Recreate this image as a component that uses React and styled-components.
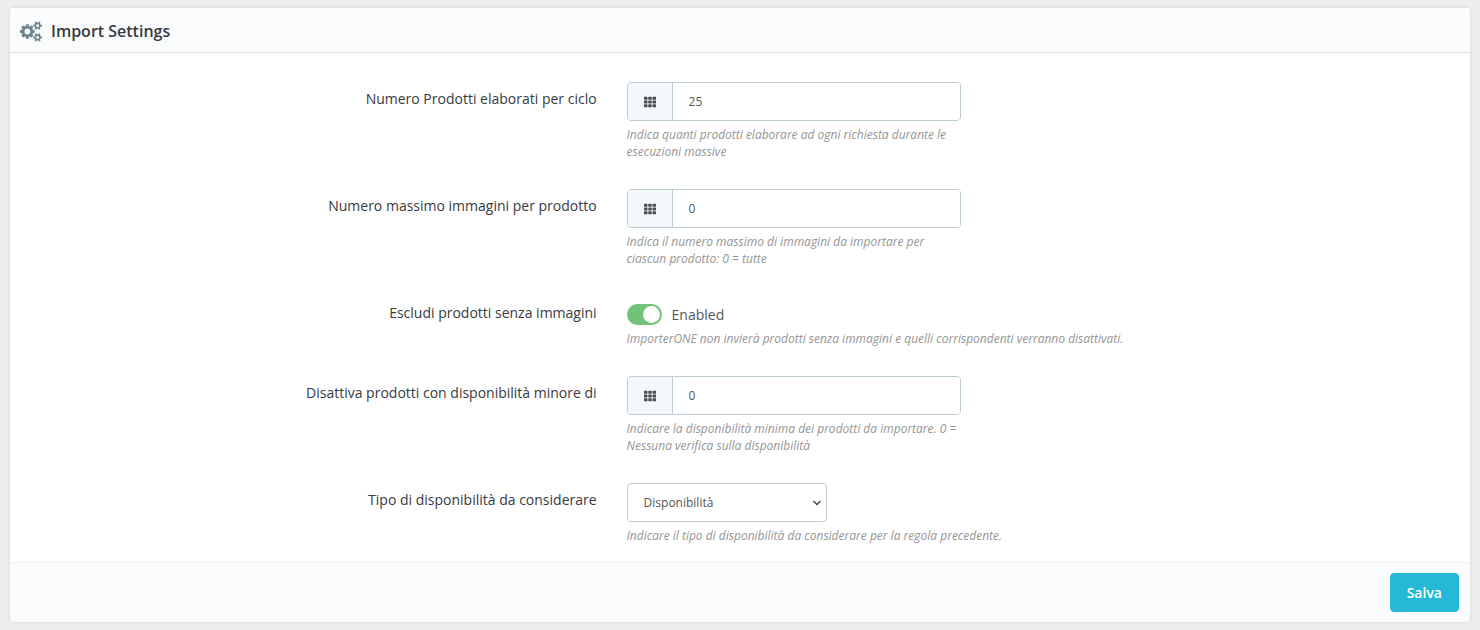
import { FaTh } from 'react-icons/fa';
import styled, { createGlobalStyle } from 'styled-components';

const GlobalStyle = createGlobalStyle`
    * {
        box-sizing: border-box;
    }
    body {
        margin: 0;
        padding: 8px 10px;
        background: #eceeef;
        color: #363a41;
        font-family: 'Open Sans', sans-serif;
        font-size: 14px;
    }
    input, select, button {
        font-family: inherit;
    }
`;

const Panel = styled.form`
    background: #fff;
    border-radius: 4px;
    box-shadow: 0 0 4px rgba(0, 0, 0, 0.1);
    overflow: hidden;
`;

const PanelHeader = styled.header`
    display: flex;
    align-items: center;
    gap: 9px;
    height: 45px;
    padding: 2px 10px 0;
    background: #fafbfc;
    border-bottom: 1px solid #dbe3e6;
    color: #363a41;
`;

const Title = styled.h3`
    margin: 0;
    font-size: 16px;
    font-weight: 600;
    line-height: 24px;
`;

const PanelBody = styled.div`
    display: grid;
    gap: 29px;
    padding: 29px 73px 18px;
`;

const Row = styled.div`
    display: grid;
    grid-template-columns: 2fr 3fr;
    gap: 30px;
`;

const Label = styled.label`
    padding-top: 7px;
    line-height: 20px;
    text-align: right;
`;

const Field = styled.div`
    max-width: ${({ $narrow }) => ($narrow ? '334px' : 'none')};
`;

const InputGroup = styled.div`
    display: flex;
    height: 39px;
    border: 1px solid #bbcdd2;
    border-radius: 4px;
    overflow: hidden;
`;

const Addon = styled.span`
    display: flex;
    align-items: center;
    justify-content: center;
    width: 45px;
    background: #f4f8fa;
    border-right: 1px solid #bbcdd2;
    color: #4a4d52;
    font-size: 12px;
`;

const TextInput = styled.input`
    flex: 1;
    min-width: 0;
    padding: 0 16px;
    border: 0;
    outline: 0;
    color: #555;
    font-size: 12px;
`;

const SelectWrap = styled.div`
    position: relative;
    width: 200px;

    svg {
        position: absolute;
        top: 16px;
        right: 6px;
        pointer-events: none;
    }
`;

const Select = styled.select`
    display: block;
    width: 100%;
    height: 39px;
    padding: 0 16px;
    appearance: none;
    background: #fff;
    border: 1px solid #bbcdd2;
    border-radius: 4px;
    color: #555;
    font-size: 12px;
`;

const SwitchRow = styled.div`
    display: flex;
    align-items: center;
    gap: 10px;
    height: 34px;
    padding-top: 2px;
    color: #55595c;
`;

const Switch = styled.input`
    display: flex;
    align-items: center;
    width: 35px;
    height: 21px;
    margin: 0;
    padding: 0 2px;
    appearance: none;
    background: #bbcdd2;
    border-radius: 11px;

    &::before {
        content: '';
        width: 17px;
        height: 17px;
        border-radius: 50%;
        background: #fff;
    }
    &:checked {
        justify-content: flex-end;
        background: #72c279;
    }
`;

const Hint = styled.p`
    margin: ${({ $tight }) => ($tight ? '0' : '5px 0 0')};
    color: #959595;
    font-size: 12px;
    font-style: italic;
    line-height: 17px;
`;

const PanelFooter = styled.footer`
    display: flex;
    justify-content: flex-end;
    padding: 10px 11px;
    background: #fafcfe;
    border-top: 1px solid #eaf0f2;
`;

const SaveButton = styled.button`
    height: 39px;
    padding: 0 16px;
    background: #25b9d7;
    border: 1px solid #25b9d7;
    border-radius: 4px;
    color: #fff;
    font-size: 14px;
    font-weight: 600;
`;

const CogsIcon = () => (
  <svg width='22' height='21' viewBox='0 0 1920 1792' fill='#6c868e'>
    <path d='M896 896q0-106-75-181t-181-75-181 75-75 181 75 181 181 75 181-75 75-181zm768 512q0-52-38-90t-90-38-90 38-38 90q0 53 37.5 90.5t90.5 37.5 90.5-37.5 37.5-90.5zm0-1024q0-52-38-90t-90-38-90 38-38 90q0 53 37.5 90.5t90.5 37.5 90.5-37.5 37.5-90.5zm-384 421v185q0 10-7 19.5t-16 10.5l-155 24q-11 35-32 76 34 48 90 115 7 11 7 20 0 12-7 19-23 30-82.5 89.5t-78.5 59.5q-11 0-21-7l-115-90q-37 19-77 31-11 108-23 155-7 24-30 24h-186q-11 0-20-7.5t-10-17.5l-23-153q-34-10-75-31l-118 89q-7 7-20 7-11 0-21-8-144-133-144-160 0-9 7-19 10-14 41-53t47-61q-23-44-35-82l-152-24q-10-1-17-9.5t-7-19.5v-185q0-10 7-19.5t16-10.5l155-24q11-35 32-76-34-48-90-115-7-11-7-20 0-12 7-20 22-30 82-89t79-59q11 0 21 7l115 90q34-18 77-32 11-108 23-154 7-24 30-24h186q11 0 20 7.5t10 17.5l23 153q34 10 75 31l118-89q8-7 20-7 11 0 21 8 144 133 144 160 0 8-7 19-12 16-42 54t-45 60q23 48 34 82l152 23q10 2 17 10.5t7 19.5zm640 533v140q0 16-149 31-12 27-30 52 51 113 51 138 0 4-4 7-122 71-124 71-8 0-46-47t-52-68q-20 2-30 2t-30-2q-14 21-52 68t-46 47q-2 0-124-71-4-3-4-7 0-25 51-138-18-25-30-52-149-15-149-31v-140q0-16 149-31 13-29 30-52-51-113-51-138 0-4 4-7 4-2 35-20t59-34 30-16q8 0 46 46.5t52 67.5q20-2 30-2t30 2q51-71 92-112l6-2q4 0 124 70 4 3 4 7 0 25-51 138 17 23 30 52 149 15 149 31zm0-1024v140q0 16-149 31-12 27-30 52 51 113 51 138 0 4-4 7-122 71-124 71-8 0-46-47t-52-68q-20 2-30 2t-30-2q-14 21-52 68t-46 47q-2 0-124-71-4-3-4-7 0-25 51-138-18-25-30-52-149-15-149-31v-140q0-16 149-31 13-29 30-52-51-113-51-138 0-4 4-7 4-2 35-20t59-34 30-16q8 0 46 46.5t52 67.5q20-2 30-2t30 2q51-71 92-112l6-2q4 0 124 70 4 3 4 7 0 25-51 138 17 23 30 52 149 15 149 31z' />
  </svg>
);

const NumberRow = ({ id, label, value, hint }) => (
  <Row>
    <Label htmlFor={id}>{label}</Label>
    <Field $narrow>
      <InputGroup>
        <Addon><FaTh /></Addon>
        <TextInput id={id} type='text' defaultValue={value} />
      </InputGroup>
      <Hint>{hint}</Hint>
    </Field>
  </Row>
);

const App = () => {
  return (
    <>
      <GlobalStyle />
      <Panel onSubmit={(e) => e.preventDefault()}>
        <PanelHeader>
          <CogsIcon />
          <Title>Import Settings</Title>
        </PanelHeader>
        <PanelBody>
          <NumberRow
            id='products'
            label='Numero Prodotti elaborati per ciclo'
            value='25'
            hint='Indica quanti prodotti elaborare ad ogni richiesta durante le esecuzioni massive'
          />
          <NumberRow
            id='images'
            label='Numero massimo immagini per prodotto'
            value='0'
            hint='Indica il numero massimo di immagini da importare per ciascun prodotto: 0 = tutte'
          />
          <Row>
            <Label htmlFor='exclude'>Escludi prodotti senza immagini</Label>
            <Field>
              <SwitchRow>
                <Switch id='exclude' type='checkbox' role='switch' defaultChecked />
                <span>Enabled</span>
              </SwitchRow>
              <Hint $tight>ImporterONE non invierà prodotti senza immagini e quelli corrispondenti verranno disattivati.</Hint>
            </Field>
          </Row>
          <NumberRow
            id='minimum'
            label='Disattiva prodotti con disponibilità minore di'
            value='0'
            hint='Indicare la disponibilità minima dei prodotti da importare. 0 = Nessuna verifica sulla disponibilità'
          />
          <Row>
            <Label htmlFor='type'>Tipo di disponibilità da considerare</Label>
            <Field>
              <SelectWrap>
                <Select id='type'>
                  <option>Disponibilità</option>
                </Select>
                <svg width='8' height='8' viewBox='0 0 8 8' fill='none' stroke='#444' strokeWidth='1.4'>
                  <path d='M0.5 2 L4 5.6 L7.5 2' />
                </svg>
              </SelectWrap>
              <Hint>Indicare il tipo di disponibilità da considerare per la regola precedente.</Hint>
            </Field>
          </Row>
        </PanelBody>
        <PanelFooter>
          <SaveButton type='submit'>Salva</SaveButton>
        </PanelFooter>
      </Panel>
    </>
  );
};

export default App;
